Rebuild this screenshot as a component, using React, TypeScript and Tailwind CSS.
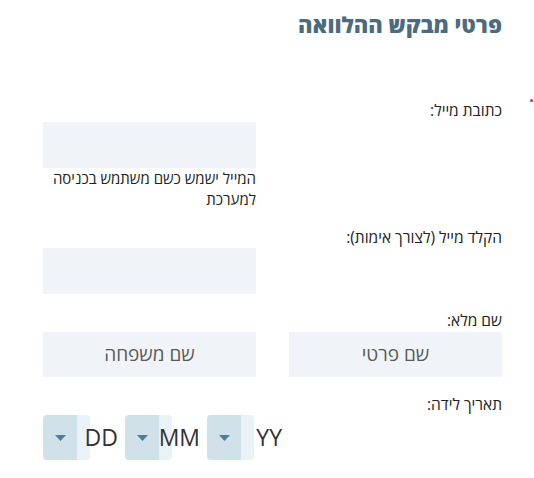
import React from "react";

function DateSelect({ label }: { label: string }) {
  return (
    <div className="grid w-[75px] h-[45px]">
      <div className="col-start-1 row-start-1 flex w-[47px] h-[45px] rounded-[4px] overflow-hidden">
        <div className="w-[34px] h-full bg-[#d0e1e9] flex items-center justify-center">
          <svg width="11" height="6" viewBox="0 0 11 6">
            <path d="M0 0 L11 0 L5.5 6 Z" fill="#4f7c97" />
          </svg>
        </div>
        <div className="w-[13px] h-full bg-[#e9f2f7]" />
      </div>
      <div className="col-start-1 row-start-1 flex items-center justify-end text-[23px] text-[#333] leading-none">
        {label}
      </div>
    </div>
  );
}

export default function App() {
  return (
    <div
      dir="rtl"
      className="relative w-[534px] h-[478px] bg-white pl-[43px] pr-[32px] text-[#222]"
      style={{ fontFamily: '"Open Sans", "DejaVu Sans", "Liberation Sans", sans-serif' }}
    >
      <span className="absolute left-[530px] top-[99px] w-[3px] h-[3px] rounded-full bg-[#d33]" />
      <h2 className="pt-[10px] text-[22px] leading-[28px] font-extrabold text-[#4b6b81]">פרטי מבקש ההלוואה</h2>

      <div className="mt-[62px] grid grid-cols-2 gap-x-[33px]">
        <div className="col-span-2 text-[15.5px] leading-[20px]">כתובת מייל:</div>
        <div className="col-start-2 mt-[2px] h-[46px] bg-[#f0f4f8]" />
        <div className="col-start-2 text-[15px] leading-[21px]">המייל ישמש כשם משתמש בכניסה למערכת</div>

        <div className="col-span-2 mt-[17px] text-[15.5px] leading-[20px]">הקלד מייל (לצורך אימות):</div>
        <div className="col-start-2 mt-[1px] h-[46px] bg-[#f0f4f8]" />

        <div className="col-span-2 mt-[16px] text-[15.5px] leading-[20px]">שם מלא:</div>
        <div className="mt-[2px] h-[45px] bg-[#f0f4f8] flex items-center justify-center text-[19px] text-[#5a5a5a]">שם פרטי</div>
        <div className="mt-[2px] h-[45px] bg-[#f0f4f8] flex items-center justify-center text-[19px] text-[#5a5a5a]">שם משפחה</div>

        <div className="col-span-2 mt-[17px] text-[15.5px] leading-[20px]">תאריך לידה:</div>
        <div dir="ltr" className="col-span-2 mt-[1px] flex gap-[7px]">
          <DateSelect label="DD" />
          <DateSelect label="MM" />
          <DateSelect label="YY" />
        </div>
      </div>
    </div>
  );
}
